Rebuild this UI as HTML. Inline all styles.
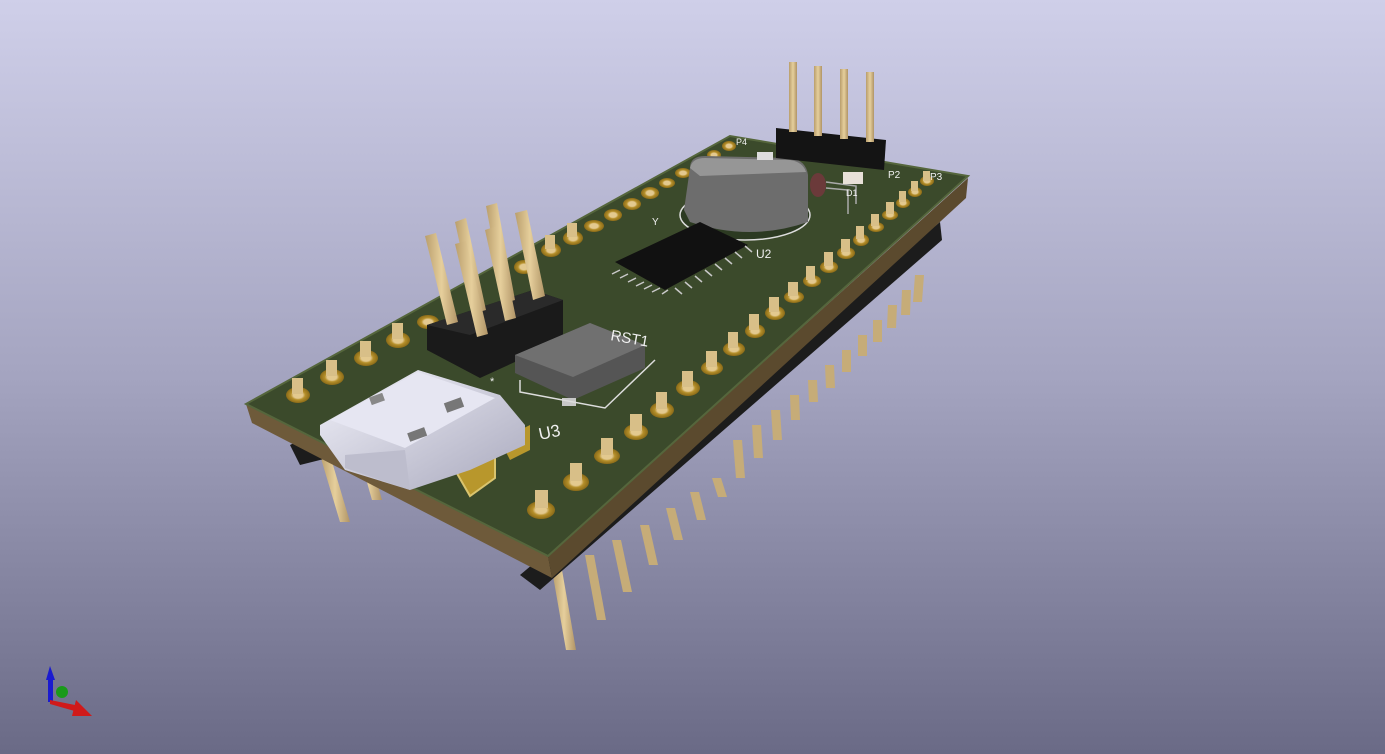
<!DOCTYPE html>
<html><head><meta charset="utf-8"><style>
html,body{margin:0;padding:0;width:1385px;height:754px;overflow:hidden}
svg{display:block}
text{font-family:"Liberation Sans",sans-serif;fill:#f0f0f0}
</style></head><body>
<svg width="1385" height="754" viewBox="0 0 1385 754">
<defs>
<linearGradient id="bg" x1="0" y1="0" x2="0" y2="1">
<stop offset="0" stop-color="#cfcfe9"/><stop offset="0.5" stop-color="#a4a4c0"/><stop offset="1" stop-color="#6a6a86"/>
</linearGradient>
<linearGradient id="pin" x1="0" y1="0" x2="1" y2="0">
<stop offset="0" stop-color="#b99e6c"/><stop offset="0.5" stop-color="#e6cf9c"/><stop offset="1" stop-color="#b09466"/>
</linearGradient>
<radialGradient id="pad"><stop offset="0.4" stop-color="#e3c98f"/><stop offset="0.6" stop-color="#b58f2a"/><stop offset="1" stop-color="#8a6a18"/></radialGradient>
<linearGradient id="usb" x1="0" y1="0" x2="1" y2="1"><stop offset="0" stop-color="#f2f2fa"/><stop offset="1" stop-color="#a9a9bd"/></linearGradient>
</defs>
<rect width="1385" height="754" fill="url(#bg)"/>

<!-- pins under board -->
<g fill="url(#pin)">
<polygon points="320,455 330,455 350,522 340,522"/>
<polygon points="355,440 365,440 382,500 372,500"/>
<polygon points="552,570 562,570 576,650 566,650"/>
</g>
<g fill="#c6ac78">
<polygon points="585,555 594,555 606,620 597,620"/>
<polygon points="612,540 621,540 632,592 623,592"/>
<polygon points="640,525 649,525 658,565 649,565"/>
<polygon points="666,508 675,508 683,540 674,540"/>
<polygon points="690,492 699,492 706,520 697,520"/>
<polygon points="712,478 721,478 727,497 718,497"/>
<polygon points="733,440 742,440 745,478 736,478"/>
<polygon points="752,425 761,425 763,458 754,458"/>
<polygon points="771,410 780,410 782,440 773,440"/>
<polygon points="790,395 799,395 800,420 791,420"/>
<polygon points="808,380 817,380 818,402 809,402"/>
<polygon points="825,365 834,365 835,388 826,388"/>
<polygon points="842,350 851,350 851,372 842,372"/>
<polygon points="858,335 867,335 867,356 858,356"/>
<polygon points="873,320 882,320 882,342 873,342"/>
<polygon points="888,305 897,305 896,328 887,328"/>
<polygon points="902,290 911,290 910,315 901,315"/>
<polygon points="915,275 924,275 922,302 913,302"/>
</g>
<!-- black plastic strip under board -->
<polygon points="520,575 940,222 942,240 540,590" fill="#1c1c1c"/>
<polygon points="290,445 330,425 340,455 300,465" fill="#1c1c1c"/>

<!-- board sides -->
<polygon points="246,404 548,556 552,578 252,423" fill="#6e5a3a"/>
<polygon points="548,556 968,178 966,198 552,578" fill="#5b4a2e"/>
<!-- board top -->
<polygon points="246,404 730,136 968,176 548,556" fill="#3b4a2b"/>
<polygon points="246,404 730,136 968,176 548,556" fill="none" stroke="#55663c" stroke-width="2"/>

<g fill="url(#pad)">
<ellipse cx="298" cy="395" rx="12" ry="8"/><ellipse cx="332" cy="377" rx="12" ry="8"/>
<ellipse cx="366" cy="358" rx="12" ry="8"/><ellipse cx="398" cy="340" rx="12" ry="8"/>
<ellipse cx="428" cy="322" rx="11" ry="7"/><ellipse cx="524" cy="267" rx="10" ry="7"/>
<ellipse cx="551" cy="250" rx="10" ry="7"/><ellipse cx="573" cy="238" rx="10" ry="7"/>
<ellipse cx="594" cy="226" rx="10" ry="6"/><ellipse cx="613" cy="215" rx="9" ry="6"/>
<ellipse cx="632" cy="204" rx="9" ry="6"/><ellipse cx="650" cy="193" rx="9" ry="6"/>
<ellipse cx="667" cy="183" rx="8" ry="5"/><ellipse cx="683" cy="173" rx="8" ry="5"/>
<ellipse cx="699" cy="164" rx="8" ry="5"/><ellipse cx="714" cy="155" rx="7" ry="5"/>
<ellipse cx="729" cy="146" rx="7" ry="5"/>
<ellipse cx="541" cy="510" rx="14" ry="9"/><ellipse cx="576" cy="482" rx="13" ry="9"/>
<ellipse cx="607" cy="456" rx="13" ry="8"/><ellipse cx="636" cy="432" rx="12" ry="8"/>
<ellipse cx="662" cy="410" rx="12" ry="8"/><ellipse cx="688" cy="388" rx="12" ry="8"/>
<ellipse cx="712" cy="368" rx="11" ry="7"/><ellipse cx="734" cy="349" rx="11" ry="7"/>
<ellipse cx="755" cy="331" rx="10" ry="7"/><ellipse cx="775" cy="313" rx="10" ry="7"/>
<ellipse cx="794" cy="297" rx="10" ry="6"/><ellipse cx="812" cy="281" rx="9" ry="6"/>
<ellipse cx="829" cy="267" rx="9" ry="6"/><ellipse cx="846" cy="253" rx="9" ry="6"/>
<ellipse cx="861" cy="240" rx="8" ry="6"/><ellipse cx="876" cy="227" rx="8" ry="5"/>
<ellipse cx="890" cy="215" rx="8" ry="5"/><ellipse cx="903" cy="203" rx="7" ry="5"/>
<ellipse cx="915" cy="192" rx="7" ry="5"/><ellipse cx="927" cy="181" rx="7" ry="5"/>
</g>
<g fill="#d8bf88">
<rect x="292" y="378" width="11" height="16"/><rect x="326" y="360" width="11" height="16"/>
<rect x="360" y="341" width="11" height="16"/><rect x="392" y="323" width="11" height="16"/>
<rect x="545" y="235" width="10" height="14"/><rect x="567" y="223" width="10" height="14"/>
<rect x="535" y="490" width="13" height="18"/><rect x="570" y="463" width="12" height="18"/>
<rect x="601" y="438" width="12" height="17"/><rect x="630" y="414" width="12" height="17"/>
<rect x="656" y="392" width="11" height="17"/><rect x="682" y="371" width="11" height="16"/>
<rect x="706" y="351" width="11" height="16"/><rect x="728" y="332" width="10" height="16"/>
<rect x="749" y="314" width="10" height="16"/><rect x="769" y="297" width="10" height="15"/>
<rect x="788" y="282" width="10" height="14"/><rect x="806" y="266" width="9" height="14"/>
<rect x="824" y="252" width="9" height="14"/><rect x="841" y="239" width="9" height="13"/>
<rect x="856" y="226" width="8" height="13"/><rect x="871" y="214" width="8" height="12"/>
<rect x="886" y="202" width="8" height="12"/><rect x="899" y="191" width="7" height="11"/>
<rect x="911" y="181" width="7" height="10"/><rect x="923" y="171" width="7" height="10"/>
</g>

<!-- crystal -->
<ellipse cx="745" cy="215" rx="65" ry="25" fill="#2c3a22" stroke="#ddd" stroke-width="1.5"/>
<path d="M690,168 Q690,156 705,156 L790,158 Q806,160 808,175 L808,222 Q750,242 690,222 L684,210 Z" fill="#6d6d6d"/>
<path d="M690,168 Q692,158 705,158 L790,160 Q803,162 806,172 L700,176 Z" fill="#969696"/>
<ellipse cx="818" cy="185" rx="8" ry="12" fill="#6b3a3a"/>
<path d="M826,188 L848,190 L848,214 M826,182 L856,186 L856,204" fill="none" stroke="#aaa" stroke-width="1.5"/>
<rect x="757" y="152" width="16" height="8" fill="#ddd"/>
<rect x="843" y="172" width="20" height="12" fill="#e8e0d8"/>

<!-- U2 chip -->
<polygon points="615,262 700,222 748,245 665,290" fill="#111"/>
<g stroke="#c8c8c8" stroke-width="1.5">
<path d="M620,270 L612,274 M628,274 L620,278 M636,278 L628,282 M644,282 L636,286 M652,285 L644,289 M660,288 L652,292 M668,290 L662,294"/>
<path d="M675,288 L682,294 M685,282 L692,288 M695,276 L702,282 M705,270 L712,276 M715,264 L722,270 M725,258 L732,264 M735,252 L742,258 M745,246 L752,252"/>
</g>
<text x="756" y="258" font-size="12">U2</text>
<text x="652" y="225" font-size="10">Y</text>

<!-- top header -->
<polygon points="776,128 886,140 884,170 776,158" fill="#141414"/>
<g fill="url(#pin)">
<rect x="789" y="62" width="8" height="70"/><rect x="814" y="66" width="8" height="70"/>
<rect x="840" y="69" width="8" height="70"/><rect x="866" y="72" width="8" height="70"/>
</g>
<text x="888" y="178" font-size="10">P2</text><text x="930" y="180" font-size="10">P3</text>
<text x="736" y="145" font-size="9">P4</text><text x="846" y="196" font-size="9">D1</text>

<!-- big header -->
<polygon points="427,325 533,290 563,300 563,340 480,378 427,350" fill="#1a1a1a"/>
<polygon points="427,325 533,290 563,300 470,335" fill="#2a2a2a"/>
<g fill="url(#pin)">
<polygon points="425,236 436,233 458,322 447,325"/>
<polygon points="455,222 466,218 486,310 475,313"/>
<polygon points="486,206 497,203 515,300 504,303"/>
<polygon points="515,213 527,210 545,296 533,300"/>
<polygon points="455,244 466,241 488,334 477,337"/>
<polygon points="485,230 497,226 516,318 505,321"/>
</g>
<text x="490" y="385" font-size="11">*</text>

<!-- RST1 button -->
<path d="M515,355 L590,323 L645,345 L645,368 L573,400 L515,373 Z" fill="#555"/>
<path d="M515,355 L590,323 L645,345 L573,377 Z" fill="#707070"/>
<rect x="562" y="398" width="14" height="8" fill="#c8c8c8"/>
<path d="M520,380 L520,392 L605,408 L655,360" fill="none" stroke="#ddd" stroke-width="1.5"/>
<text x="610" y="340" font-size="15" transform="rotate(10 610 340)">RST1</text>

<!-- USB -->
<polygon points="455,470 495,448 495,478 470,496" fill="#b8972c" stroke="#d9c46e" stroke-width="2"/>
<polygon points="500,440 530,425 530,450 510,460" fill="#b8972c"/>
<path d="M320,425 L418,370 L500,395 L525,425 L525,445 L470,470 L410,490 L345,470 L320,435 Z" fill="url(#usb)"/>
<path d="M330,420 L418,372 L495,398 L405,448 Z" fill="#e6e6f2"/>
<path d="M345,455 L405,450 L410,490 L345,468 Z" fill="#bdbdcd"/>
<rect x="445" y="400" width="18" height="10" fill="#777" transform="rotate(-20 454 405)"/>
<rect x="408" y="430" width="18" height="9" fill="#777" transform="rotate(-20 417 434)"/>
<rect x="370" y="395" width="14" height="8" fill="#888" transform="rotate(-20 377 399)"/>
<text x="540" y="440" font-size="17" transform="rotate(-12 540 440)">U3</text>

<!-- axis icon -->
<polygon points="46,680 50,666 55,680" fill="#1a1ad0"/>
<rect x="48" y="678" width="5" height="24" fill="#1a1ad0"/>
<circle cx="62" cy="692" r="6" fill="#1a9a1a"/>
<polygon points="50,700 80,706 78,712 50,704" fill="#d01a1a"/>
<polygon points="76,700 92,716 72,716" fill="#d01a1a"/>
</svg>
</body></html>
